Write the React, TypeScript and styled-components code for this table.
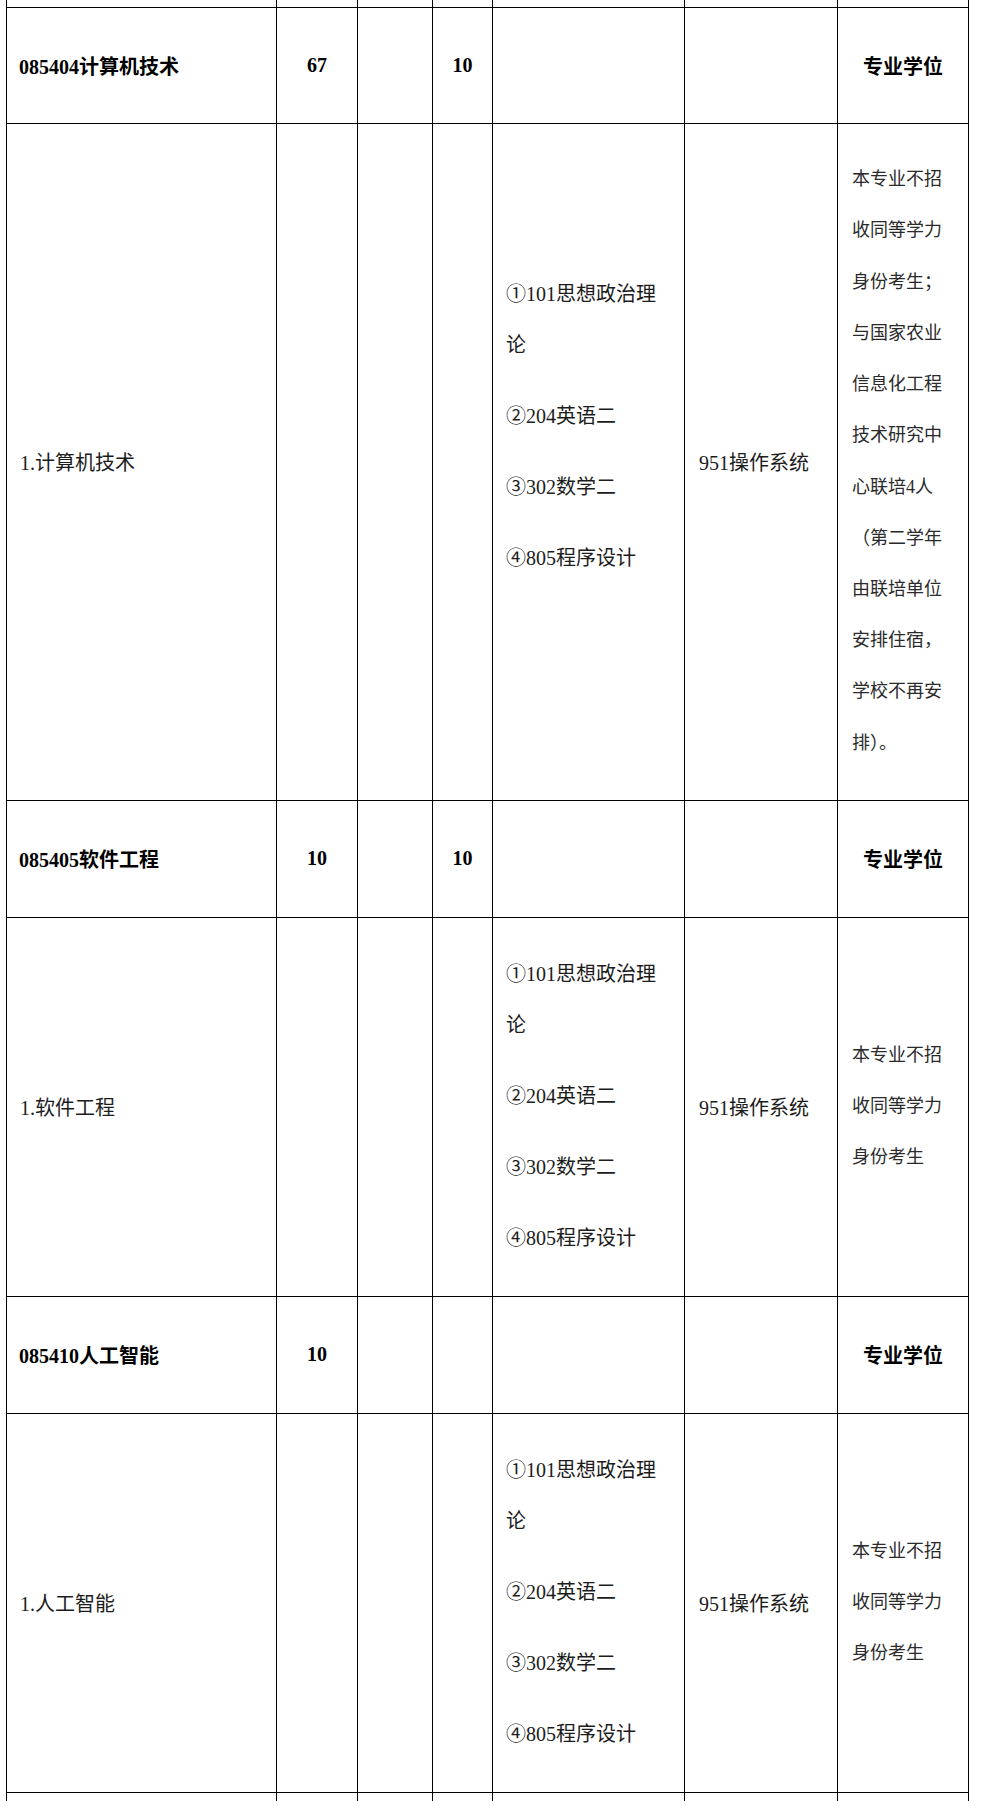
import React from 'react';
import styled, { createGlobalStyle } from 'styled-components';

const Global = createGlobalStyle`
  html, body { margin: 0; padding: 0; background: #fff; }
  body { font-family: "Liberation Serif", "Noto Sans CJK SC", serif; color: #000; }
`;

const Page = styled.div`
  padding-left: 6px;
  height: 1801px;
  overflow: hidden;
`;

const Table = styled.table`
  border-collapse: collapse;
  table-layout: fixed;
  width: 963px;
  font-family: "Liberation Serif", "Noto Sans CJK SC", serif;
`;

const Row = styled.tr<{ $h: number }>`
  height: ${(p) => p.$h}px;
`;

const Cell = styled.td<{ $align?: 'left' | 'center'; $pad?: number }>`
  border: 1px solid #000;
  padding: 0 ${(p) => p.$pad ?? 13}px;
  vertical-align: middle;
  text-align: ${(p) => p.$align ?? 'left'};
  overflow: hidden;
`;

const StubCell = styled.td<{ $edge: 'top' | 'bottom' }>`
  border-left: 1px solid #000;
  border-right: 1px solid #000;
  ${(p) => (p.$edge === 'top' ? 'border-top: none;' : 'border-bottom: none;')}
  padding: 0;
`;

const HeadText = styled.span`
  font-size: 20px;
  font-weight: 700;
  color: #000;
  white-space: nowrap;
`;

const BodyText = styled.span`
  font-size: 20px;
  color: #1c1c1c;
  white-space: nowrap;
`;

const Subjects = styled.div<{ $extra?: boolean }>`
  display: flex;
  flex-direction: column;
  gap: 20px;
  padding-bottom: ${(p) => (p.$extra ? 71 : 0)}px;
`;

const Para = styled.div`
  font-size: 20px;
  line-height: 51px;
  color: #1c1c1c;
  white-space: nowrap;
`;

const Line = styled.div``;

const Notes = styled.div`
  font-size: 18px;
  line-height: 51.2px;
  color: #2a2a2a;
  white-space: nowrap;
`;

type Program = {
  code: string;
  total: string;
  c4: string;
  dir: string;
  exam: string;
  notes: string[];
  heights: [number, number];
  extra?: boolean;
};

const subjects: string[][] = [
  ['①101思想政治理', '论'],
  ['②204英语二'],
  ['③302数学二'],
  ['④805程序设计'],
];

const programs: Program[] = [
  {
    code: '085404计算机技术',
    total: '67',
    c4: '10',
    dir: '1.计算机技术',
    exam: '951操作系统',
    notes: [
      '本专业不招',
      '收同等学力',
      '身份考生；',
      '与国家农业',
      '信息化工程',
      '技术研究中',
      '心联培4人',
      '（第二学年',
      '由联培单位',
      '安排住宿，',
      '学校不再安',
      '排）。',
    ],
    heights: [116, 677],
    extra: true,
  },
  {
    code: '085405软件工程',
    total: '10',
    c4: '10',
    dir: '1.软件工程',
    exam: '951操作系统',
    notes: ['本专业不招', '收同等学力', '身份考生'],
    heights: [117, 379],
  },
  {
    code: '085410人工智能',
    total: '10',
    c4: '',
    dir: '1.人工智能',
    exam: '951操作系统',
    notes: ['本专业不招', '收同等学力', '身份考生'],
    heights: [117, 379],
  },
];

const colWidths = [270, 81, 75, 60, 192, 153, 131];

function StubRow({ edge, h }: { edge: 'top' | 'bottom'; h: number }) {
  return (
    <Row $h={h}>
      {colWidths.map((_, i) => (
        <StubCell key={i} $edge={edge} />
      ))}
    </Row>
  );
}

function ProgramRows({ p }: { p: Program }) {
  return (
    <>
      <Row $h={p.heights[0]}>
        <Cell $pad={12}>
          <HeadText>{p.code}</HeadText>
        </Cell>
        <Cell $align="center" $pad={0}>
          <HeadText>{p.total}</HeadText>
        </Cell>
        <Cell $align="center" $pad={0} />
        <Cell $align="center" $pad={0}>
          <HeadText>{p.c4}</HeadText>
        </Cell>
        <Cell />
        <Cell />
        <Cell $align="center" $pad={0}>
          <HeadText>专业学位</HeadText>
        </Cell>
      </Row>
      <Row $h={p.heights[1]}>
        <Cell $pad={13}>
          <BodyText>{p.dir}</BodyText>
        </Cell>
        <Cell />
        <Cell />
        <Cell />
        <Cell $pad={13}>
          <Subjects $extra={p.extra}>
            {subjects.map((lines, i) => (
              <Para key={i}>
                {lines.map((l, j) => (
                  <Line key={j}>{l}</Line>
                ))}
              </Para>
            ))}
          </Subjects>
        </Cell>
        <Cell $pad={14}>
          <BodyText>{p.exam}</BodyText>
        </Cell>
        <Cell $pad={14}>
          <Notes>
            {p.notes.map((l, i) => (
              <Line key={i}>{l}</Line>
            ))}
          </Notes>
        </Cell>
      </Row>
    </>
  );
}

export default function App() {
  return (
    <>
      <Global />
      <Page>
        <Table>
          <colgroup>
            {colWidths.map((w, i) => (
              <col key={i} style={{ width: w }} />
            ))}
          </colgroup>
          <tbody>
            <StubRow edge="top" h={7} />
            {programs.map((p) => (
              <ProgramRows key={p.code} p={p} />
            ))}
            <StubRow edge="bottom" h={40} />
          </tbody>
        </Table>
      </Page>
    </>
  );
}
